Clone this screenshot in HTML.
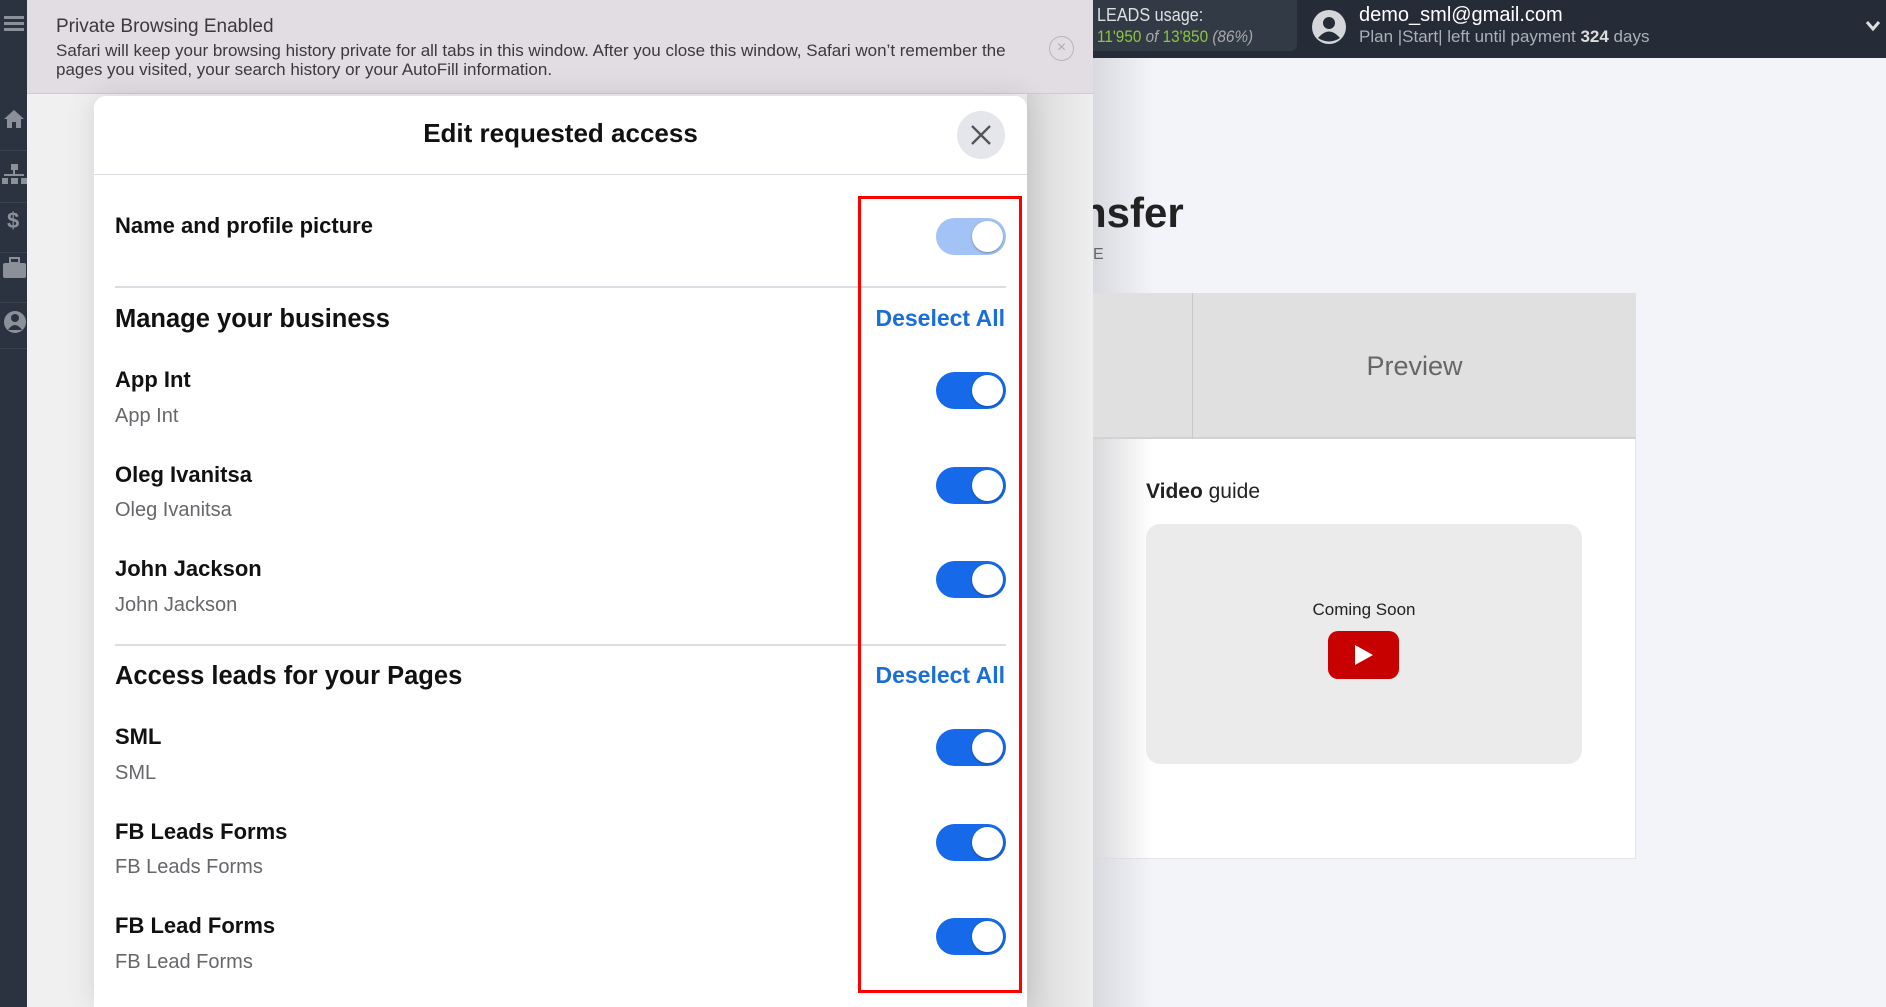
<!DOCTYPE html>
<html><head><meta charset="utf-8"><style>
*{margin:0;padding:0;box-sizing:border-box}
html,body{width:1886px;height:1007px;overflow:hidden}
body{position:relative;background:#f0f0f1;font-family:"Liberation Sans",sans-serif}
.abs{position:absolute}
.side{left:0;top:0;width:27px;height:1007px;background:#2b3340}
.banner{left:27px;top:0;width:1066px;height:94px;background:#e2dde3;border-bottom:1px solid #cfcacf}
.bt{left:29px;color:#3a3a3e;font-size:17px;white-space:nowrap}
.topbar{left:1093px;top:0;width:793px;height:58px;background:#262c37}
.right{left:1093px;top:58px;width:793px;height:949px;background:#f2f4fa;overflow:hidden}
.modal{left:94px;top:96px;width:933px;height:911px;background:#fff;border-radius:12px 12px 0 0;box-shadow:0 0 30px rgba(0,0,0,.12)}
.t{left:21px;font-weight:bold;font-size:22px;color:#111;white-space:nowrap}
.s{left:21px;font-size:20px;color:#65676b;white-space:nowrap}
.h{left:21px;font-weight:bold;font-size:25.5px;color:#111;white-space:nowrap}
.ds{right:22px;font-weight:bold;font-size:23px;color:#1a6ed8;white-space:nowrap}
.tg{left:842px;width:70px;height:37px;border-radius:19px;background:#1669e8}
.tg::after{content:"";position:absolute;right:3px;top:3px;width:31px;height:31px;border-radius:50%;background:#fff;box-shadow:0 1px 2px rgba(0,0,0,.3)}
.line{left:21px;width:891px;height:2px;background:#dadde1}
</style></head><body>
<div class="abs side">
 <div class="abs" style="left:4px;top:16px;width:20px;height:3px;background:#8a919b;box-shadow:0 6px 0 #8a919b,0 12px 0 #8a919b"></div>
 <svg class="abs" style="left:2px;top:106px" width="25" height="240" fill="#8c9099">
  <path d="M2 13 L12 4 L22 13 L19 13 L19 22 L14 22 L14 16 L10 16 L10 22 L5 22 L5 13Z"/>
  <rect x="9" y="58" width="7" height="6"/><rect x="11" y="64" width="2" height="5"/><rect x="2" y="68" width="20" height="2"/><rect x="0" y="72" width="6" height="6"/><rect x="9" y="72" width="7" height="6"/><rect x="19" y="72" width="6" height="6"/>
  <text x="5" y="122" font-size="22" font-weight="bold" font-family="Liberation Sans">$</text>
  <rect x="1" y="157" width="23" height="15" rx="2"/><rect x="8" y="152" width="9" height="5" fill="none" stroke="#8c9099" stroke-width="2"/>
  <circle cx="13" cy="216" r="11"/><circle cx="13" cy="212" r="4" fill="#2b3340"/><path d="M6 224 Q13 214 20 224Z" fill="#2b3340"/>
 </svg>
 <div class="abs" style="left:0;top:150px;width:27px;height:1px;background:#3b4350;box-shadow:0 52px 0 #3b4350,0 102px 0 #3b4350,0 152px 0 #3b4350,0 198px 0 #3b4350"></div>
</div>
<div class="abs banner">
 <div class="abs bt" style="top:16px;font-size:19px">Private Browsing Enabled</div>
 <div class="abs bt" style="top:41px">Safari will keep your browsing history private for all tabs in this window. After you close this window, Safari won’t remember the</div>
 <div class="abs bt" style="top:60px">pages you visited, your search history or your AutoFill information.</div>
 <div class="abs" style="left:1022px;top:36px;width:25px;height:25px;border:1.5px solid #b8b4ba;border-radius:50%;color:#b0acb2;font-size:16px;text-align:center;line-height:21px">×</div>
</div>
<div class="abs topbar">
 <div class="abs" style="left:0;top:0;width:204px;height:51px;background:#323a45;border-radius:0 0 6px 0"></div>
 <div class="abs" style="left:4px;top:5px;color:#dde0e4;font-size:18px;transform:scaleX(.9);transform-origin:left;white-space:nowrap">LEADS usage:</div>
 <div class="abs" style="left:4px;top:27px;color:#8dc63f;font-size:17px;transform:scaleX(.9);transform-origin:left;white-space:nowrap">11'950 <i style="color:#aaa">of</i> 13'850 <i style="color:#aaa">(86%)</i></div>
 <svg class="abs" style="left:218px;top:9px" width="36" height="36"><circle cx="18" cy="18" r="17" fill="#d4d6d9"/><circle cx="18" cy="14" r="6" fill="#262c37"/><path d="M7 29 Q18 16 29 29 Q18 36 7 29Z" fill="#262c37"/></svg>
 <div class="abs" style="left:266px;top:4px;color:#fff;font-size:20px;white-space:nowrap">demo_sml@gmail.com</div>
 <div class="abs" style="left:266px;top:27px;color:#aab0b8;font-size:17px;white-space:nowrap">Plan |Start| left until payment <b style="color:#ddd">324</b> days</div>
 <svg class="abs" style="left:772px;top:20px" width="16" height="12"><path d="M2 2L8 9L14 2" stroke="#ddd" stroke-width="3" fill="none"/></svg>
</div>
<div class="abs right">
 <div class="abs" style="left:0;top:0;width:60px;height:949px;background:linear-gradient(to right,rgba(214,215,219,.9),rgba(242,244,250,0))"></div>
 <div class="abs" style="left:-12px;top:131px;font-size:42px;font-weight:bold;color:#222">nsfer</div>
 <div class="abs" style="left:0;top:188px;font-size:16px;color:#666">E</div>
 <div class="abs" style="left:0;top:235px;width:543px;height:566px;background:#fff;border:1px solid #e3e5ea"></div>
 <div class="abs" style="left:0;top:235px;width:543px;height:146px;background:#e0e0e0;border-bottom:2px solid #d2d2d2"></div>
 <div class="abs" style="left:99px;top:235px;width:1px;height:146px;background:#c8c8c8"></div>
 <div class="abs" style="left:100px;top:293px;width:443px;text-align:center;font-size:27px;color:#666">Preview</div>
 <div class="abs" style="left:0;top:381px;width:60px;height:420px;background:linear-gradient(to right,#d9d9dc,rgba(255,255,255,0))"></div>
 <div class="abs" style="left:53px;top:422px;font-size:21px;color:#222"><b>Video</b> guide</div>
 <div class="abs" style="left:53px;top:466px;width:436px;height:240px;background:#ebebeb;border-radius:14px"></div>
 <div class="abs" style="left:53px;top:542px;width:436px;text-align:center;font-size:17px;color:#222">Coming Soon</div>
 <div class="abs" style="left:235px;top:573px;width:71px;height:48px;background:#c70000;border-radius:10px"></div>
 <div class="abs" style="left:262px;top:587px;width:0;height:0;border-left:18px solid #fff;border-top:10px solid transparent;border-bottom:10px solid transparent"></div>
</div>
<div class="abs" style="left:1027px;top:94px;width:66px;height:913px;background:linear-gradient(to right,#d8d8d8,#efefef)"></div>
<div class="abs modal">
 <div class="abs" style="left:0;top:22px;width:933px;text-align:center;font-size:26px;font-weight:bold;color:#111">Edit requested access</div>
 <div class="abs" style="left:863px;top:15px;width:48px;height:48px;border-radius:50%;background:#e4e6eb"></div>
 <svg class="abs" style="left:876px;top:28px" width="22" height="22"><path d="M2 2L20 20M20 2L2 20" stroke="#555" stroke-width="2.4"/></svg>
 <div class="abs" style="left:0;top:78px;width:933px;height:1px;background:#dadde1"></div>
 <div class="abs t" style="top:117px">Name and profile picture</div>
 <div class="abs tg" style="top:122px;background:#a3c2f5"></div>
 <div class="abs line" style="top:190px"></div>
 <div class="abs h" style="top:209px">Manage your business</div>
 <div class="abs ds" style="top:209px">Deselect All</div>
 <div class="abs t" style="top:271px">App Int</div><div class="abs s" style="top:309px">App Int</div>
 <div class="abs tg" style="top:276px"></div>
 <div class="abs t" style="top:366px">Oleg Ivanitsa</div><div class="abs s" style="top:403px">Oleg Ivanitsa</div>
 <div class="abs tg" style="top:371px"></div>
 <div class="abs t" style="top:460px">John Jackson</div><div class="abs s" style="top:498px">John Jackson</div>
 <div class="abs tg" style="top:465px"></div>
 <div class="abs line" style="top:548px"></div>
 <div class="abs h" style="top:566px">Access leads for your Pages</div>
 <div class="abs ds" style="top:566px">Deselect All</div>
 <div class="abs t" style="top:628px">SML</div><div class="abs s" style="top:666px">SML</div>
 <div class="abs tg" style="top:633px"></div>
 <div class="abs t" style="top:723px">FB Leads Forms</div><div class="abs s" style="top:760px">FB Leads Forms</div>
 <div class="abs tg" style="top:728px"></div>
 <div class="abs t" style="top:817px">FB Lead Forms</div><div class="abs s" style="top:855px">FB Lead Forms</div>
 <div class="abs tg" style="top:822px"></div>
</div>
<div class="abs" style="left:858px;top:196px;width:164px;height:797px;border:3px solid #f00"></div>
</body></html>
